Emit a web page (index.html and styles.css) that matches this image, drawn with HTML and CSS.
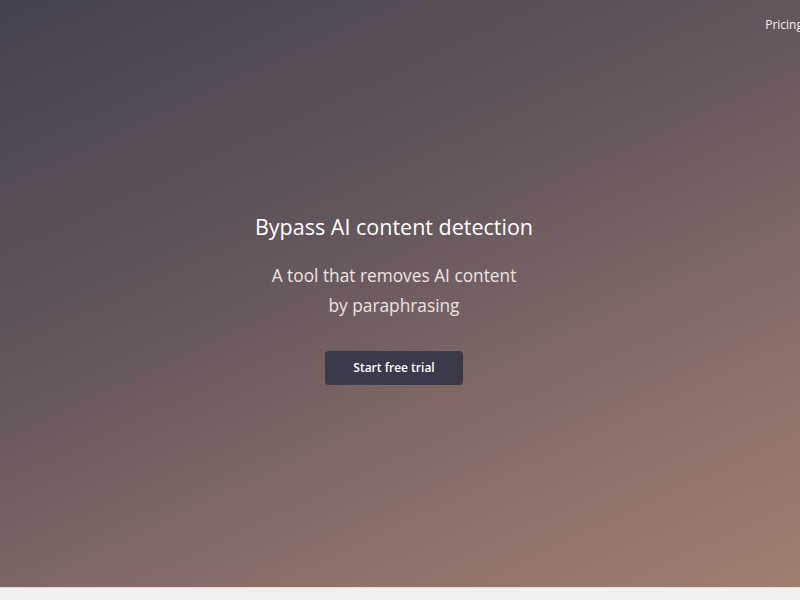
FILE: index.html
```html
<!DOCTYPE html>
<html>
<head lang="en">
    <meta charset="utf-8">
    <meta name="viewport" content="width=device-width, initial-scale=1">
    <title>Bypass AI content detection</title>
    <link rel="stylesheet" href="styles.css">
</head>
<body>
<main>
    <section class="hero">
        <header class="topbar">
            <a class="nav-link" href="#">Pricing</a>
        </header>
        <div class="hero-content">
            <h1>Bypass AI content detection</h1>
            <p class="lead">A tool that removes AI content<br>by paraphrasing</p>
            <a class="cta" href="#">Start free trial</a>
        </div>
    </section>
    <section class="below"></section>
</main>
</body>
</html>
```

FILE: styles.css
```css
html, body {
    margin: 0;
    padding: 0;
}

body {
    font-family: "Open Sans", "Noto Sans", sans-serif;
    background-color: #f0f0f0;
    overflow: hidden;
}

.hero {
    height: 587px;
    background: linear-gradient(155deg, #44414e 0%, #65575d 42%, #8c7069 75%, #a07e70 100%);
    border-bottom: 1px solid #e9d9d6;
    display: flex;
    flex-direction: column;
}

.topbar {
    display: flex;
    justify-content: flex-end;
    padding: 16px 0 0;
    margin-right: -3px;
}

.nav-link {
    color: #f2eeee;
    font-size: 12px;
    text-decoration: none;
}

.hero-content {
    display: flex;
    flex-direction: column;
    align-items: center;
    text-align: center;
    padding: 179px 12px 0 0;
}

.hero-content h1 {
    margin: 0;
    color: #ffffff;
    font-size: 21.5px;
    font-weight: 500;
    line-height: 30px;
}

.lead {
    margin: 19px 0 0;
    color: #ece4e2;
    font-size: 17.3px;
    line-height: 30px;
}

.cta {
    margin-top: 30px;
    width: 138px;
    height: 34px;
    line-height: 34px;
    background-color: #3b3a4a;
    color: #ffffff;
    border-radius: 4px;
    font-size: 12px;
    font-weight: 600;
    text-decoration: none;
}

.below {
    height: 12px;
}
```
